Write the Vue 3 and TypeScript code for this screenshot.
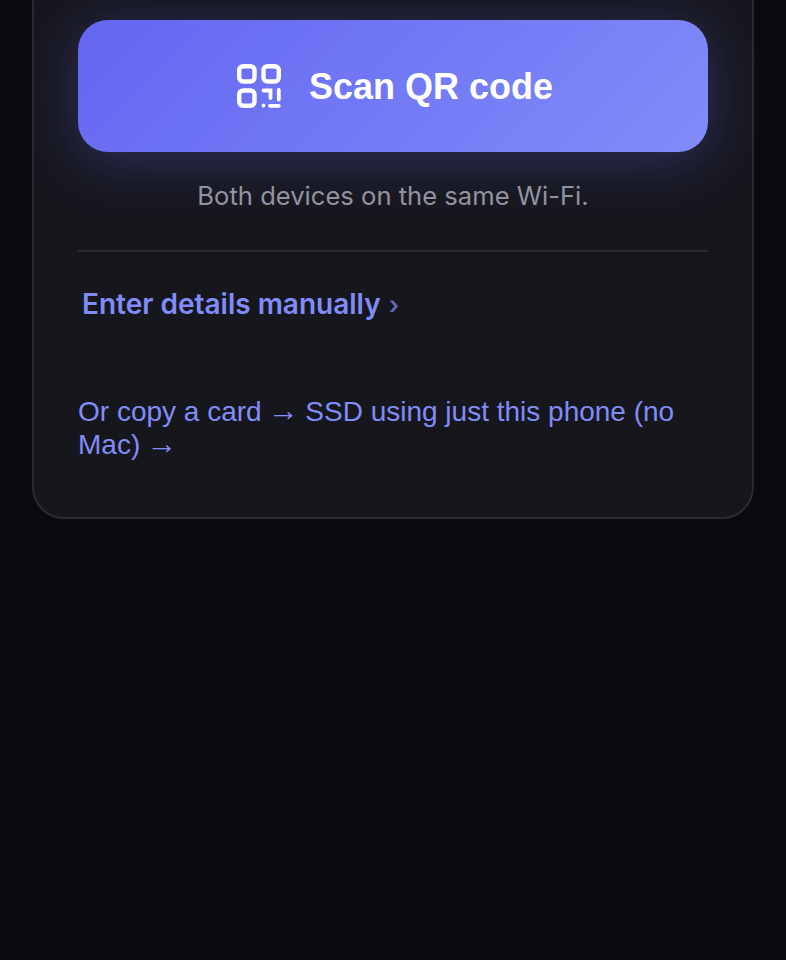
<script setup lang="ts">
const title: string = 'Scan QR code'
</script>

<template>
  <main class="page">
    <section class="card">
      <button class="scan" type="button">
        <svg class="qr" viewBox="0 0 44 44" width="44" height="44" fill="none" stroke="#fff" stroke-width="4.4" stroke-linecap="round" aria-hidden="true">
          <rect x="2.2" y="2.2" width="15.3" height="15.3" rx="4" />
          <rect x="26.5" y="2.2" width="15.3" height="15.3" rx="4" />
          <rect x="2.2" y="26.5" width="15.3" height="15.3" rx="4" />
          <path d="M26.5 26.5h7V34M41.8 26v9.5M26.5 41.5v.1M33 41.8h8.8" stroke-width="3.8" />
        </svg>
        <span>{{ title }}</span>
      </button>
      <p class="hint">Both devices on the same Wi-Fi.</p>
      <hr class="rule" />
      <button class="manual" type="button">Enter details manually <span class="chev">›</span></button>
      <a class="copy" href="#">
        <span class="line">Or copy a card<span class="arrow"> → </span>SSD using just this phone (no</span>
        <span class="line">Mac)<span class="arrow"> →</span></span>
      </a>
    </section>
  </main>
</template>

<style scoped>
.page {
  height: 960px;
  overflow: hidden;
  background: #0b0b0f;
  padding: 0 32px;
  box-sizing: border-box;
}
.card {
  margin-top: -60px;
  height: 579px;
  box-sizing: border-box;
  padding: 78px 44px 0;
  background: #16171d;
  border: 2px solid #2a2a35;
  border-radius: 32px;
}
.scan {
  display: flex;
  align-items: center;
  justify-content: center;
  gap: 28px;
  width: 100%;
  height: 132px;
  border: 0;
  border-radius: 30px;
  padding: 1px 0 0 4px;
  color: #fff;
  background: linear-gradient(135deg, #6366f1, #818cf8);
  box-shadow: 0 8px 56px rgba(99, 102, 241, 0.32);
  font: 700 36px "Liberation Sans", Arial, sans-serif;
}
.qr {
  flex: none;
  margin-top: -1px;
}
.hint {
  margin: 28px 0 0;
  text-align: center;
  color: #93939f;
  font: 400 25.6px/32px Inter, sans-serif;
}
.rule {
  margin: 38px 0 0;
  height: 2px;
  border: 0;
  background: #2a2a35;
}
.manual {
  display: block;
  margin: 34px 0 0;
  padding: 0 4px;
  border: 0;
  background: none;
  color: #818cf8;
  font: 600 28px/36px Inter, sans-serif;
}
.chev {
  opacity: 0.7;
  font-size: 25px;
  margin-left: 1px;
}
.copy {
  display: block;
  margin-top: 72px;
  color: #818cf8;
  text-decoration: none;
  font: 400 28px/33px "Liberation Sans", Arial, sans-serif;
}
.line {
  display: block;
}
.arrow {
  font-size: 31px;
  line-height: 0;
  word-spacing: -2.3px;
}
</style>
